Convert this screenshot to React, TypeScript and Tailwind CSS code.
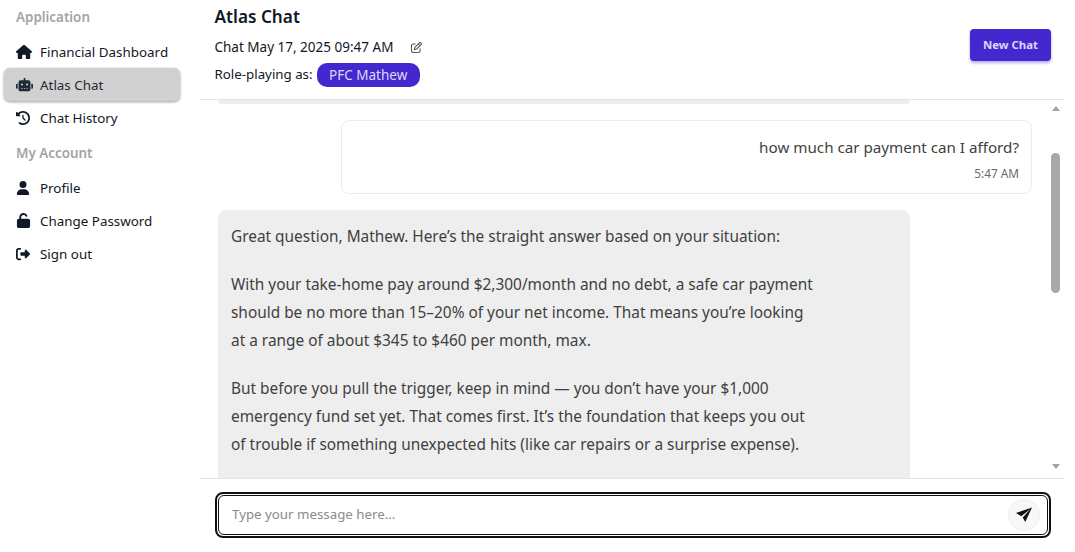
import { FaHouse, FaRobot, FaClockRotateLeft, FaUser, FaUnlock, FaRightFromBracket, FaRegPenToSquare } from 'react-icons/fa6';
import type { ComponentType } from 'react';

interface NavItem {
  label: string;
  icon: ComponentType<{ className?: string }>;
  iconClass: string;
  active?: boolean;
}

const appItems: NavItem[] = [
  { label: 'Financial Dashboard', icon: FaHouse, iconClass: 'size-4' },
  { label: 'Atlas Chat', icon: FaRobot, iconClass: 'size-[17px]', active: true },
  { label: 'Chat History', icon: FaClockRotateLeft, iconClass: 'size-[14px]' },
];

const accountItems: NavItem[] = [
  { label: 'Profile', icon: FaUser, iconClass: 'size-[14px]' },
  { label: 'Change Password', icon: FaUnlock, iconClass: 'size-[15px]' },
  { label: 'Sign out', icon: FaRightFromBracket, iconClass: 'size-[14px]' },
];

function NavRow({ item }: { item: NavItem }) {
  const Icon = item.icon;
  return (
    <div
      className={`flex h-[33px] items-center rounded-md pl-3 text-[13.4px] ${
        item.active ? 'bg-[#d1d1d1] text-[#1f2937] shadow-[0_1px_3px_rgba(0,0,0,0.4)]' : 'text-[#111827]'
      }`}
    >
      <span className="flex w-6 shrink-0 items-center">
        <Icon className={`${item.iconClass} ${item.active ? 'text-[#1f2937]' : 'text-[#111827]'}`} />
      </span>
      <span className="pt-[1px]">{item.label}</span>
    </div>
  );
}

function Scrollbar() {
  return (
    <div className="flex w-[13px] shrink-0 flex-col items-start">
      <div className="mt-[6px] ml-[1px] h-0 w-0 border-x-[4px] border-b-[5px] border-x-transparent border-b-[#a3a3a3]" />
      <div className="mt-[42px] h-[140px] w-[9px] rounded-full bg-[#a8a8a8]" />
      <div className="mt-[171px] ml-[1px] h-0 w-0 border-x-[4px] border-t-[5px] border-x-transparent border-t-[#a3a3a3]" />
    </div>
  );
}

export default function App() {
  return (
    <div className="flex h-[552px] w-[1075px] overflow-hidden bg-white pr-[11px] font-['Noto_Sans',sans-serif] text-[#111827]">
      <aside className="w-[200px] shrink-0 px-1 pt-2">
        <div className="pl-3 text-[13.4px] leading-[18px] font-semibold text-[#a3a3a3]">Application</div>
        <nav className="mt-[9px] flex w-[176px] flex-col">
          {appItems.map((item) => (
            <NavRow key={item.label} item={item} />
          ))}
        </nav>
        <div className="mt-[10px] pl-3 text-[13.4px] leading-[18px] font-semibold text-[#a3a3a3]">My Account</div>
        <nav className="mt-[9px] flex w-[176px] flex-col">
          {accountItems.map((item) => (
            <NavRow key={item.label} item={item} />
          ))}
        </nav>
      </aside>

      <main className="flex min-w-0 flex-1 flex-col">
        <header className="flex h-[100px] shrink-0 items-start justify-between border-b border-[#e5e5e5] pt-[5px] pr-[13px] pl-[14.5px]">
          <div className="flex flex-col">
            <h1 className="text-[17.2px] leading-[24px] font-semibold">Atlas Chat</h1>
            <div className="mt-[6px] flex h-[24px] items-center text-[13.5px]">
              Chat May 17, 2025 09:47 AM
              <FaRegPenToSquare className="ml-[18px] size-[11px] text-[#555]" />
            </div>
            <div className="mt-[4px] flex items-center text-[13.3px]">
              Role-playing as:
              <span className="ml-1 flex h-[24px] items-center rounded-[10px] bg-[#4527d0] px-[12.5px] text-[13.5px] text-[#dcd8fb]">PFC Mathew</span>
            </div>
          </div>
          <button className="mt-[24px] h-[32px] w-[81px] rounded-[4px] bg-[#4527d0] text-[11.4px] font-bold text-[#dcd8fb] shadow-[0_2px_3px_rgba(69,39,208,0.4)]">
            New Chat
          </button>
        </header>

        <div className="flex h-[378px] shrink-0 overflow-hidden">
          <div className="min-w-0 flex-1 pl-[18px]">
            <div className="h-[4px] w-[692px] rounded-b-lg bg-[#eeeeee]" />
            <div className="mt-[16px] ml-[123px] flex h-[74px] w-[691px] flex-col items-end rounded-lg border border-[#ececec] px-3 pt-[14px]">
              <p className="text-[15.2px] leading-[24px] text-[#3f3f3f]">how much car payment can I afford?</p>
              <p className="mt-[6px] text-[11.8px] leading-[16px] text-[#6b6b6b]">5:47 AM</p>
            </div>
            <div className="mt-[16px] h-[300px] w-[692px] rounded-lg bg-[#eeeeee] px-[13px] pt-[13px] text-[15.4px] leading-[28px] text-[#3f3f3f]">
              <p>Great question, Mathew. Here’s the straight answer based on your situation:</p>
              <p className="mt-[20px]">
                With your take-home pay around $2,300/month and no debt, a safe car payment
                <br />
                should be no more than 15–20% of your net income. That means you’re looking
                <br />
                at a range of about $345 to $460 per month, max.
              </p>
              <p className="mt-[20px]">
                But before you pull the trigger, keep in mind — you don’t have your $1,000
                <br />
                emergency fund set yet. That comes first. It’s the foundation that keeps you out
                <br />
                of trouble if something unexpected hits (like car repairs or a surprise expense).
              </p>
            </div>
          </div>
          <Scrollbar />
        </div>

        <footer className="shrink-0 border-t border-[#e5e5e5] pt-[13px] pr-[13px] pl-[15px]">
          <div className="flex h-[46px] items-center rounded-lg border-2 border-[#111] p-[1px]">
            <div className="flex h-full w-full items-center justify-between rounded-md border border-[#111] pr-[7px] pl-[13px]">
              <span className="-mt-[1px] text-[13.3px] text-[#8a8a8a]">Type your message here...</span>
              <button className="flex size-[32px] items-center justify-center rounded-full border border-[#eeeeee] bg-[#f8f8f8]">
                <svg viewBox="0 0 16 16" className="size-4 fill-[#111]">
                  <path d="M16 0.5 L0 6 L5.2 9.3 L14.5 2 L6.7 10.6 L9.3 15 Z" />
                </svg>
              </button>
            </div>
          </div>
        </footer>
      </main>
    </div>
  );
}
